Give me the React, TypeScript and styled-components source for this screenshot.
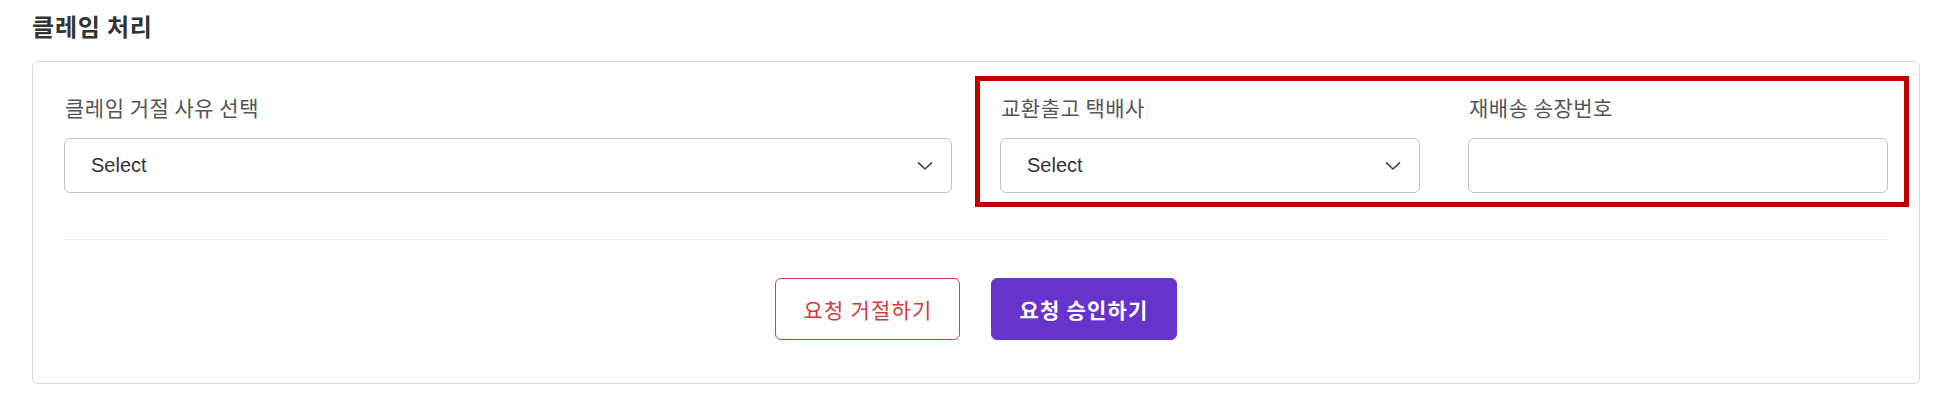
import React from "react";
import styled, { createGlobalStyle } from "styled-components";

const GlobalStyle = createGlobalStyle`
  html, body {
    margin: 0;
    padding: 0;
    background: #ffffff;
  }
  body {
    font-family: "Noto Sans CJK KR", "Noto Sans", sans-serif;
    color: #333;
  }
  * { box-sizing: border-box; }
`;

const Page = styled.div`
  padding: 9px 34px 0 32px;
  width: 1954px;
`;

const Title = styled.h2`
  margin: 0 0 19px;
  font-size: 24px;
  line-height: 33px;
  font-weight: 700;
  letter-spacing: 0.8px;
  color: #333;
`;

const Card = styled.section`
  border: 1px solid #dcdcdc;
  border-radius: 6px;
  padding: 30px 31px 43px;
  background: #fff;
`;

const FormGrid = styled.div`
  display: grid;
  grid-template-columns: repeat(4, 1fr);
  column-gap: 48px;
`;

const FieldGroup = styled.div<{ $span: number; $highlight?: boolean }>`
  grid-column: span ${(p) => p.$span};
  display: grid;
  grid-template-columns: repeat(${(p) => (p.$highlight ? 2 : 1)}, 1fr);
  column-gap: 48px;
  position: relative;

  ${(p) =>
    p.$highlight &&
    `
    &::after {
      content: "";
      position: absolute;
      left: -25px;
      right: -21px;
      top: -16px;
      bottom: -14px;
      border: 5px solid #c00000;
      pointer-events: none;
    }
  `}
`;

const Field = styled.div`
  display: flex;
  flex-direction: column;
  gap: 16px;
  min-width: 0;
`;

const Label = styled.label`
  font-size: 21px;
  line-height: 30px;
  letter-spacing: 0.5px;
  color: #555;
  padding-left: 1px;
`;

const SelectBox = styled.div`
  height: 55px;
  border: 1px solid #c4c4c4;
  border-radius: 6px;
  display: flex;
  align-items: center;
  justify-content: space-between;
  padding: 0 18px 0 26px;
  background: #fff;
  font-family: "Liberation Sans", Arial, sans-serif;
  font-size: 20px;
  color: #333;
`;

const TextInput = styled.input`
  height: 55px;
  width: 100%;
  border: 1px solid #c4c4c4;
  border-radius: 6px;
  background: #fff;
  padding: 0 20px;
  font-family: "Liberation Sans", Arial, sans-serif;
  font-size: 20px;
  outline: none;
`;

const Divider = styled.hr`
  border: none;
  border-top: 1px solid #ececec;
  margin: 46px 0 38px;
`;

const Actions = styled.div`
  display: flex;
  justify-content: center;
  gap: 31px;
`;

const Button = styled.button<{ $variant: "reject" | "approve" }>`
  height: 62px;
  padding: 0 27px;
  border-radius: 6px;
  font-family: "Noto Sans CJK KR", "Noto Sans", sans-serif;
  font-size: 21px;
  letter-spacing: 1.2px;
  cursor: pointer;
  ${(p) =>
    p.$variant === "reject"
      ? `
    background: #fff;
    border: 1.5px solid #e03b3b;
    color: #d83a3a;
    font-weight: 400;
  `
      : `
    background: #6633cc;
    border: 1px solid #6633cc;
    color: #fff;
    font-weight: 700;
  `}
`;

const Chevron = () => (
  <svg width="16" height="10" viewBox="0 0 16 10" fill="none">
    <path d="M1.5 1.8 L8 8 L14.5 1.8" stroke="#444" strokeWidth="1.6" strokeLinecap="round" strokeLinejoin="round" />
  </svg>
);

const Select = ({ value }: { value: string }) => (
  <SelectBox>
    <span>{value}</span>
    <Chevron />
  </SelectBox>
);

export default function App() {
  return (
    <>
      <GlobalStyle />
      <Page>
        <Title>클레임 처리</Title>
        <Card>
          <FormGrid>
            <FieldGroup $span={2}>
              <Field>
                <Label>클레임 거절 사유 선택</Label>
                <Select value="Select" />
              </Field>
            </FieldGroup>
            <FieldGroup $span={2} $highlight>
              <Field>
                <Label>교환출고 택배사</Label>
                <Select value="Select" />
              </Field>
              <Field>
                <Label>재배송 송장번호</Label>
                <TextInput type="text" />
              </Field>
            </FieldGroup>
          </FormGrid>
          <Divider />
          <Actions>
            <Button $variant="reject">요청 거절하기</Button>
            <Button $variant="approve">요청 승인하기</Button>
          </Actions>
        </Card>
      </Page>
    </>
  );
}
